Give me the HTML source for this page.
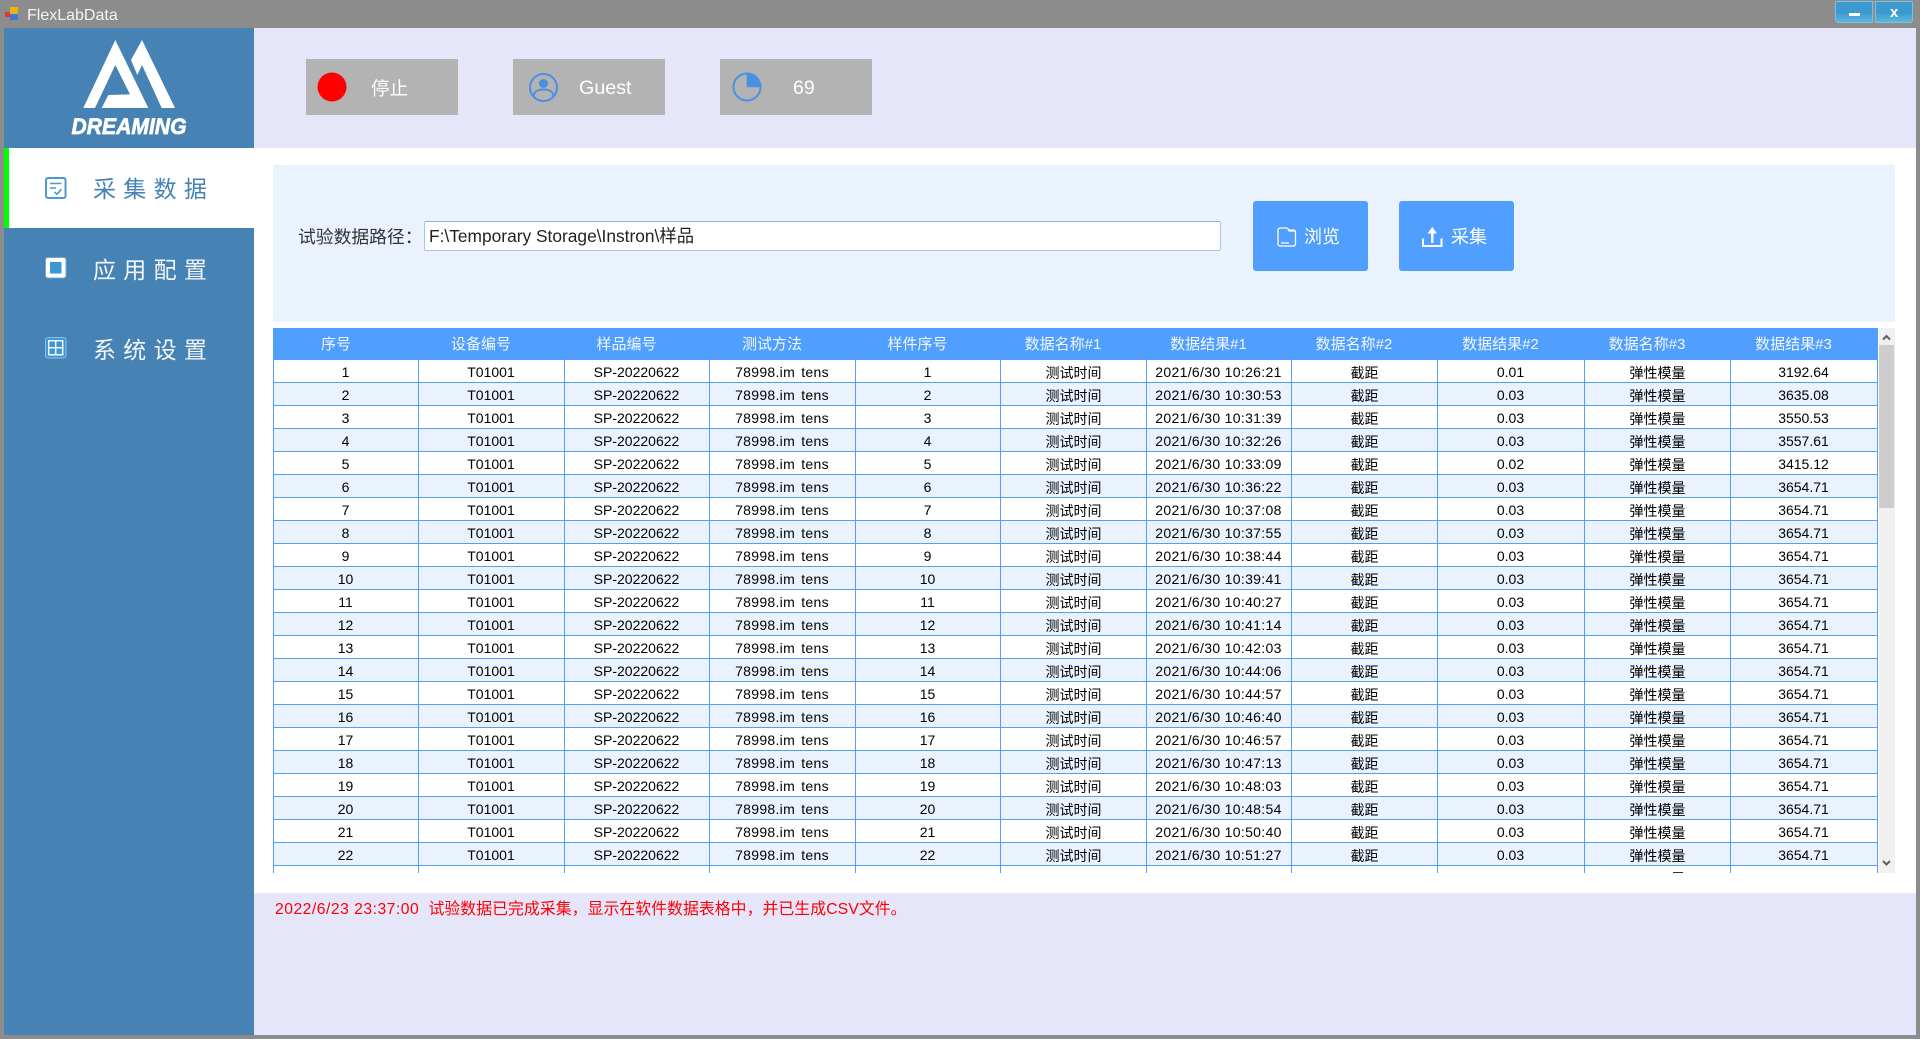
<!DOCTYPE html>
<html lang="zh"><head><meta charset="utf-8"><title>FlexLabData</title>
<style>
*{box-sizing:border-box}
html,body{margin:0;padding:0;width:1920px;height:1039px;overflow:hidden;background:#8c8c8c;font-family:"Liberation Sans","Noto Sans CJK SC",sans-serif}
.a{position:absolute;white-space:nowrap}
svg{position:absolute;overflow:visible}
.gb{position:absolute;top:59px;width:152px;height:56px;background:#b3b3b3}
.menu{font-size:23px;letter-spacing:7.3px;left:93px;line-height:30px}
.bt{position:absolute;top:201px;width:115px;height:70px;background:#509fff;border-radius:3px}
.bt span{position:absolute;top:24px;color:#fff;font-size:18px;line-height:24px}
table{position:absolute;left:0;top:0;border-collapse:separate;border-spacing:0;table-layout:fixed;width:1605px}
th{height:32px;background:#509fff;color:#f2f7ff;font-weight:400;font-size:15px;padding:1px 22px 0 0;text-align:center;line-height:31px}
td{height:23px;border-right:1px solid #509fff;border-bottom:1px solid #509fff;padding:3px 1px 0 0;text-align:center;font-size:14px;line-height:19px;color:#000;overflow:hidden;white-space:nowrap}
td:first-child{border-left:1px solid #509fff}
td.c{font-size:14px;padding-top:4px;padding-right:0;line-height:18px}
td.m{word-spacing:2px;letter-spacing:.3px}
td.d{letter-spacing:.32px}
tr:nth-child(even) td{background:#eaf2fe}
</style></head><body>
<!-- title bar -->
<svg style="left:0;top:0" width="24" height="26"><rect x="5" y="12" width="5" height="5" fill="#d8402c"/><rect x="10" y="7" width="8" height="7" fill="#f0b010"/><rect x="10" y="14" width="8" height="6" fill="#3c78d8"/></svg>
<div class="a" style="left:27px;top:6px;font-size:16px;line-height:20px;color:#f4f4f4">FlexLabData</div>
<div class="a" style="left:1835px;top:1px;width:38px;height:22px;background:linear-gradient(#3b9ad0 55%,#5fb6dd);border:1px solid #7cc0e0;border-radius:0 0 0 3px"></div>
<div class="a" style="left:1875px;top:1px;width:38px;height:22px;background:linear-gradient(#3b9ad0 55%,#5fb6dd);border:1px solid #7cc0e0;border-radius:0 0 3px 0"></div>
<div class="a" style="left:1849px;top:13px;width:11px;height:3px;background:#fff"></div>
<div class="a" style="left:1890px;top:4px;font-size:15px;line-height:18px;font-weight:700;color:#fff">x</div>

<!-- sidebar -->
<div class="a" style="left:4px;top:28px;width:250px;height:1007px;background:#4682b4"></div>
<svg style="left:0;top:0" width="254" height="148">
<polygon fill="#fff" points="115.3,40 83.3,108 95,108 115.3,65 130,94.3 108.3,95 101.7,108 148.3,108"/>
<polygon fill="#fff" points="142,40 175,108 161.7,108 142,65 137.3,75 131,60"/>
<text x="71.500" y="134" fill="#fff" stroke="#fff" stroke-width=".7" font-family="Liberation Sans" font-weight="700" font-style="italic" font-size="22" textLength="115" lengthAdjust="spacingAndGlyphs">DREAMING</text>
</svg>
<div class="a" style="left:4px;top:148px;width:250px;height:80px;background:#fff"></div>
<div class="a" style="left:4px;top:148px;width:5px;height:80px;background:#0f0"></div>
<svg style="left:45px;top:177px" width="22" height="22" fill="none" stroke="#4a9ad0" stroke-width="2"><rect x="1" y="1" width="19.5" height="20" rx="2"/><path d="M5 6.500h11.500M5 11h6" stroke-width="1.600"/><path d="M9.500 15l2.500 2.200 4.500-5" stroke-width="1.600"/></svg>
<div class="a menu" style="top:174px;color:#4682b4">采集数据</div>
<svg style="left:45px;top:257px" width="22" height="22"><rect x=".5" y=".5" width="20.5" height="20.5" rx="2.500" fill="#fff" stroke="#6fa8d6"/><rect x="5" y="5" width="11.500" height="11.500" fill="#3d97d3"/></svg>
<div class="a menu" style="top:255px;color:#f5f8fb">应用配置</div>
<svg style="left:45px;top:337px" width="22" height="22"><rect x=".5" y=".5" width="20.5" height="20.5" rx="2.500" fill="#3d97d3" stroke="#8fc0e4"/><path d="M3.700 3.700h14v14h-14zM10.700 3.700v14M3.700 10.700h14" fill="none" stroke="#f3f8fc" stroke-width="1.500"/></svg>
<div class="a menu" style="top:335px;color:#f5f8fb">系统设置</div>

<!-- header -->
<div class="a" style="left:254px;top:28px;width:1662px;height:120px;background:#e5e6fa"></div>
<div class="gb" style="left:306px"></div>
<svg style="left:317px;top:72px" width="30" height="30"><circle cx="15" cy="15" r="14.500" fill="#f00"/></svg>
<div class="a" style="left:371px;top:76px;font-size:18.500px;line-height:25px;color:#fff">停止</div>
<div class="gb" style="left:513px"></div>
<svg style="left:528px;top:72px" width="32" height="32" fill="none" stroke="#4a90e2" stroke-width="2"><circle cx="15.500" cy="15.500" r="13.500"/><circle cx="15.500" cy="11.500" r="4.500" fill="#4a90e2" stroke="none"/><path d="M5.500 24.500C6 19 10 17.500 15.500 17.500S25 19 25.500 24.500"/></svg>
<div class="a" style="left:579px;top:76px;font-size:19.700px;line-height:25px;color:#fff">Guest</div>
<div class="gb" style="left:720px"></div>
<svg style="left:732px;top:71px" width="32" height="32" fill="none"><circle cx="15" cy="16" r="13.500" stroke="#4a90e2" stroke-width="2"/><path d="M14.700 16.300V1.500A14.500 14.500 0 0 1 29.300 16.300Z" fill="#4a90e2"/></svg>
<div class="a" style="left:793px;top:76px;font-size:19.500px;line-height:25px;color:#fff">69</div>

<!-- main -->
<div class="a" style="left:254px;top:148px;width:1662px;height:745px;background:#fff"></div>
<div class="a" style="left:273px;top:165px;width:1622px;height:157px;background:#eaf2fe"></div>
<div class="a" style="left:298px;top:224px;font-size:17.800px;line-height:26px;color:#333">试验数据路径：</div>
<div class="a" style="left:424px;top:221px;width:797px;height:30px;background:#fff;border:1px solid #a8c4dc;border-top-color:#94aec4;border-radius:2px;padding-left:4px;font-size:17.350px;line-height:29px;color:#222">F:\Temporary Storage\Instron\样品</div>
<div class="bt" style="left:1253px">
<svg style="left:24px;top:26px" width="20" height="20" fill="none" stroke="#fff" stroke-width="1.300"><path d="M1 3a2 2 0 0 1 2-2h6.500a2 2 0 0 1 2 2h5a2 2 0 0 1 2 2v12a2 2 0 0 1-2 2H3a2 2 0 0 1-2-2z"/><path d="M4 16h8M11.500 4h7"/></svg>
<span style="left:51px">浏览</span></div>
<div class="bt" style="left:1399px">
<svg style="left:23px;top:26px" width="21" height="20" fill="none" stroke="#fff" stroke-width="2"><path d="M1 11.500v7.500h18.500v-7.500"/><path d="M10.300 16V5" stroke-width="2.400"/><path d="M5.500 6.500L10.300 0l4.800 6.500z" fill="#fff" stroke="none"/></svg>
<span style="left:52px">采集</span></div>

<!-- table -->
<div class="a" style="left:273px;top:328px;width:1606px;height:545px;overflow:hidden;background:#fff">
<table><colgroup><col style="width:146px"><col style="width:146px"><col style="width:145px"><col style="width:146px"><col style="width:145px"><col style="width:146px"><col style="width:145px"><col style="width:146px"><col style="width:147px"><col style="width:146px"><col style="width:147px"></colgroup>
<thead><tr><th style="padding-right:20px">序号</th><th>设备编号</th><th>样品编号</th><th>测试方法</th><th>样件序号</th><th>数据名称#1</th><th>数据结果#1</th><th>数据名称#2</th><th>数据结果#2</th><th>数据名称#3</th><th>数据结果#3</th></tr></thead>
<tbody>
<tr><td>1</td><td>T01001</td><td>SP-20220622</td><td class="m">78998.im tens</td><td>1</td><td class="c">测试时间</td><td class="d">2021/6/30 10:26:21</td><td class="c">截距</td><td>0.01</td><td class="c">弹性模量</td><td>3192.64</td></tr>
<tr><td>2</td><td>T01001</td><td>SP-20220622</td><td class="m">78998.im tens</td><td>2</td><td class="c">测试时间</td><td class="d">2021/6/30 10:30:53</td><td class="c">截距</td><td>0.03</td><td class="c">弹性模量</td><td>3635.08</td></tr>
<tr><td>3</td><td>T01001</td><td>SP-20220622</td><td class="m">78998.im tens</td><td>3</td><td class="c">测试时间</td><td class="d">2021/6/30 10:31:39</td><td class="c">截距</td><td>0.03</td><td class="c">弹性模量</td><td>3550.53</td></tr>
<tr><td>4</td><td>T01001</td><td>SP-20220622</td><td class="m">78998.im tens</td><td>4</td><td class="c">测试时间</td><td class="d">2021/6/30 10:32:26</td><td class="c">截距</td><td>0.03</td><td class="c">弹性模量</td><td>3557.61</td></tr>
<tr><td>5</td><td>T01001</td><td>SP-20220622</td><td class="m">78998.im tens</td><td>5</td><td class="c">测试时间</td><td class="d">2021/6/30 10:33:09</td><td class="c">截距</td><td>0.02</td><td class="c">弹性模量</td><td>3415.12</td></tr>
<tr><td>6</td><td>T01001</td><td>SP-20220622</td><td class="m">78998.im tens</td><td>6</td><td class="c">测试时间</td><td class="d">2021/6/30 10:36:22</td><td class="c">截距</td><td>0.03</td><td class="c">弹性模量</td><td>3654.71</td></tr>
<tr><td>7</td><td>T01001</td><td>SP-20220622</td><td class="m">78998.im tens</td><td>7</td><td class="c">测试时间</td><td class="d">2021/6/30 10:37:08</td><td class="c">截距</td><td>0.03</td><td class="c">弹性模量</td><td>3654.71</td></tr>
<tr><td>8</td><td>T01001</td><td>SP-20220622</td><td class="m">78998.im tens</td><td>8</td><td class="c">测试时间</td><td class="d">2021/6/30 10:37:55</td><td class="c">截距</td><td>0.03</td><td class="c">弹性模量</td><td>3654.71</td></tr>
<tr><td>9</td><td>T01001</td><td>SP-20220622</td><td class="m">78998.im tens</td><td>9</td><td class="c">测试时间</td><td class="d">2021/6/30 10:38:44</td><td class="c">截距</td><td>0.03</td><td class="c">弹性模量</td><td>3654.71</td></tr>
<tr><td>10</td><td>T01001</td><td>SP-20220622</td><td class="m">78998.im tens</td><td>10</td><td class="c">测试时间</td><td class="d">2021/6/30 10:39:41</td><td class="c">截距</td><td>0.03</td><td class="c">弹性模量</td><td>3654.71</td></tr>
<tr><td>11</td><td>T01001</td><td>SP-20220622</td><td class="m">78998.im tens</td><td>11</td><td class="c">测试时间</td><td class="d">2021/6/30 10:40:27</td><td class="c">截距</td><td>0.03</td><td class="c">弹性模量</td><td>3654.71</td></tr>
<tr><td>12</td><td>T01001</td><td>SP-20220622</td><td class="m">78998.im tens</td><td>12</td><td class="c">测试时间</td><td class="d">2021/6/30 10:41:14</td><td class="c">截距</td><td>0.03</td><td class="c">弹性模量</td><td>3654.71</td></tr>
<tr><td>13</td><td>T01001</td><td>SP-20220622</td><td class="m">78998.im tens</td><td>13</td><td class="c">测试时间</td><td class="d">2021/6/30 10:42:03</td><td class="c">截距</td><td>0.03</td><td class="c">弹性模量</td><td>3654.71</td></tr>
<tr><td>14</td><td>T01001</td><td>SP-20220622</td><td class="m">78998.im tens</td><td>14</td><td class="c">测试时间</td><td class="d">2021/6/30 10:44:06</td><td class="c">截距</td><td>0.03</td><td class="c">弹性模量</td><td>3654.71</td></tr>
<tr><td>15</td><td>T01001</td><td>SP-20220622</td><td class="m">78998.im tens</td><td>15</td><td class="c">测试时间</td><td class="d">2021/6/30 10:44:57</td><td class="c">截距</td><td>0.03</td><td class="c">弹性模量</td><td>3654.71</td></tr>
<tr><td>16</td><td>T01001</td><td>SP-20220622</td><td class="m">78998.im tens</td><td>16</td><td class="c">测试时间</td><td class="d">2021/6/30 10:46:40</td><td class="c">截距</td><td>0.03</td><td class="c">弹性模量</td><td>3654.71</td></tr>
<tr><td>17</td><td>T01001</td><td>SP-20220622</td><td class="m">78998.im tens</td><td>17</td><td class="c">测试时间</td><td class="d">2021/6/30 10:46:57</td><td class="c">截距</td><td>0.03</td><td class="c">弹性模量</td><td>3654.71</td></tr>
<tr><td>18</td><td>T01001</td><td>SP-20220622</td><td class="m">78998.im tens</td><td>18</td><td class="c">测试时间</td><td class="d">2021/6/30 10:47:13</td><td class="c">截距</td><td>0.03</td><td class="c">弹性模量</td><td>3654.71</td></tr>
<tr><td>19</td><td>T01001</td><td>SP-20220622</td><td class="m">78998.im tens</td><td>19</td><td class="c">测试时间</td><td class="d">2021/6/30 10:48:03</td><td class="c">截距</td><td>0.03</td><td class="c">弹性模量</td><td>3654.71</td></tr>
<tr><td>20</td><td>T01001</td><td>SP-20220622</td><td class="m">78998.im tens</td><td>20</td><td class="c">测试时间</td><td class="d">2021/6/30 10:48:54</td><td class="c">截距</td><td>0.03</td><td class="c">弹性模量</td><td>3654.71</td></tr>
<tr><td>21</td><td>T01001</td><td>SP-20220622</td><td class="m">78998.im tens</td><td>21</td><td class="c">测试时间</td><td class="d">2021/6/30 10:50:40</td><td class="c">截距</td><td>0.03</td><td class="c">弹性模量</td><td>3654.71</td></tr>
<tr><td>22</td><td>T01001</td><td>SP-20220622</td><td class="m">78998.im tens</td><td>22</td><td class="c">测试时间</td><td class="d">2021/6/30 10:51:27</td><td class="c">截距</td><td>0.03</td><td class="c">弹性模量</td><td>3654.71</td></tr>
<tr><td>&nbsp;</td><td></td><td></td><td></td><td></td><td></td><td></td><td></td><td></td><td></td><td></td></tr>
</tbody></table>
</div>
<div class="a" style="left:1673px;top:871.500px;width:10px;height:1.500px;background:#333"></div>

<!-- scrollbar -->
<div class="a" style="left:1879px;top:328px;width:16px;height:545px;background:#f0f0f0"></div>
<div class="a" style="left:1879px;top:345px;width:15px;height:163px;background:#cdcdcd"></div>
<svg style="left:1879px;top:328px" width="16" height="545" fill="none" stroke="#606060" stroke-width="2"><path d="M4 11.500l3.500-3.500 3.500 3.500"/><path d="M4 533l3.500 3.500 3.500-3.500"/></svg>

<!-- footer -->
<div class="a" style="left:254px;top:893px;width:1662px;height:142px;background:#e5e6fa"></div>
<div class="a" style="left:275px;top:899px;font-size:15.700px;letter-spacing:.5px;line-height:22px;color:#f00">2022/6/23 23:37:00</div>
<div class="a" style="left:428.500px;top:899px;font-size:15.850px;letter-spacing:.06px;line-height:22px;color:#f00">试验数据已完成采集，显示在软件数据表格中，并已生成CSV文件。</div>
</body></html>
